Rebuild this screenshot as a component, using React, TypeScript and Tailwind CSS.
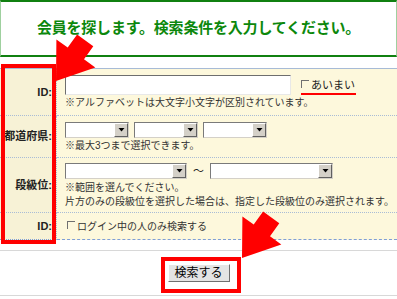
import React from "react";

type Pt = [number, number];

function arrowPoints(tip: Pt, ang: number, h: number, a: number, s: number, L: number): string {
  const u: Pt = [Math.cos(ang), Math.sin(ang)];
  const n: Pt = [-u[1], u[0]];
  const B: Pt = [tip[0] - h * u[0], tip[1] - h * u[1]];
  const C: Pt = [B[0] - L * u[0], B[1] - L * u[1]];
  const pts: Pt[] = [
    tip,
    [B[0] + a * n[0], B[1] + a * n[1]],
    [B[0] + s * n[0], B[1] + s * n[1]],
    [C[0] + s * n[0], C[1] + s * n[1]],
    [C[0] - s * n[0], C[1] - s * n[1]],
    [B[0] - s * n[0], B[1] - s * n[1]],
    [B[0] - a * n[0], B[1] - a * n[1]],
  ];
  return pts.map((p) => `${p[0].toFixed(1)},${p[1].toFixed(1)}`).join(" ");
}

const FONT = "'Liberation Sans', 'Noto Sans CJK JP', sans-serif";

function Select({ w }: { w: number }) {
  return (
    <div
      className="flex h-[16px] bg-white border-t border-l border-t-[#7a7a7a] border-l-[#7a7a7a] border-b border-r border-b-[#d4d0c8] border-r-[#d4d0c8]"
      style={{ width: w }}
    >
      <div className="flex-1" />
      <div className="w-[14px] h-[14px] bg-[#d4d0c8] border border-t-white border-l-white border-b-[#606060] border-r-[#606060] flex items-center justify-center">
        <svg width="7" height="4" viewBox="0 0 7 4">
          <polygon points="0.5,0 6.5,0 3.5,3.5" fill="#000" />
        </svg>
      </div>
    </div>
  );
}

function Check() {
  return <span className="inline-block w-[8px] h-[8px] border-t border-l border-[#707070] mr-[2px] translate-y-[-1px]" />;
}

export default function App() {
  return (
    <div
      className="relative w-[397px] h-[299px] bg-white overflow-hidden text-[#222]"
      style={{ fontFamily: FONT }}
    >
      {/* title */}
      <div className="h-[57px] border-y-2 border-y-[#108010] border-x border-x-[#9fd09f] flex items-center justify-center">
        <div className="text-[15px] font-bold text-[#0c880c] tracking-[-0.2px]">
          会員を探します。検索条件を入力してください。
        </div>
      </div>

      {/* table */}
      <div className="mt-[11px] border-t border-[#a7bbd6]">
        <div className="grid grid-cols-[57px_1fr]">
          {/* ID row */}
          <div className="h-[47px] bg-[#f7f2d6] flex items-center justify-end pr-[4px] text-[11px] font-bold border-r border-dotted border-[#a9bcd6] border-b">
            ID:
          </div>
          <div className="h-[47px] bg-[#fdf8dc] pl-[8px] pt-[6px] border-b border-dotted border-[#a9bcd6]">
            <div className="flex items-center">
              <div className="w-[226px] h-[20px] bg-white border-t border-l border-[#6e6e6e] border-b border-r border-b-[#e8e8e8] border-r-[#e8e8e8]" />
              <div className="ml-[10px] text-[11px] flex items-center">
                <Check />
                あいまい
              </div>
            </div>
            <div className="text-[10px] leading-[12px] mt-[2px] text-[#333]">
              ※アルファベットは大文字小文字が区別されています。
            </div>
          </div>

          {/* prefecture row */}
          <div className="h-[42px] bg-[#f7f2d6] flex items-center justify-end pr-[4px] text-[11px] font-bold border-r border-dotted border-[#a9bcd6] border-b whitespace-nowrap">
            都道府県:
          </div>
          <div className="h-[42px] bg-[#fdf8dc] pl-[8px] pt-[6px] border-b border-dotted border-[#a9bcd6]">
            <div className="flex gap-[5px]">
              <Select w={64} />
              <Select w={64} />
              <Select w={64} />
            </div>
            <div className="text-[10px] leading-[12px] mt-[2px] text-[#333]">
              ※最大3つまで選択できます。
            </div>
          </div>

          {/* grade row */}
          <div className="h-[55px] bg-[#f7f2d6] flex items-center justify-end pr-[4px] text-[11px] font-bold border-r border-dotted border-[#a9bcd6] border-b">
            段級位:
          </div>
          <div className="h-[55px] bg-[#fdf8dc] pl-[8px] pt-[5px] border-b border-dotted border-[#a9bcd6]">
            <div className="flex items-center">
              <Select w={122} />
              <span className="text-[11px] mx-[6px]">～</span>
              <Select w={123} />
            </div>
            <div className="text-[10px] leading-[14px] mt-[1px] text-[#333] whitespace-nowrap">
              ※範囲を選んでください。
              <br />
              片方のみの段級位を選択した場合は、指定した段級位のみ選択されます。
            </div>
          </div>

          {/* login row */}
          <div className="h-[27px] bg-[#f7f2d6] flex items-center justify-end pr-[4px] text-[11px] font-bold border-r border-dotted border-r-[#a9bcd6] border-b border-b-[#7f9fd6]">
            ID:
          </div>
          <div className="h-[27px] bg-[#fdf8dc] pl-[10px] flex items-center text-[10px] text-[#333] border-b border-dashed border-[#7f9fd6]">
            <Check />
            ログイン中の人のみ検索する
          </div>
        </div>
      </div>

      {/* button area */}
      <div className="mt-[10px] border-t border-[#d8d8d8] h-[46px] flex items-center justify-center border-b">
        <div className="w-[62px] h-[18px] bg-[#e4e4e4] border border-t-white border-l-white border-b-[#707070] border-r-[#707070] flex items-center justify-center text-[12px] text-black">
          検索する
        </div>
      </div>

      {/* annotation overlays */}
      <div className="absolute left-[1px] top-[64px] w-[55px] h-[180px] border-4 border-[#ff0000]" />
      <div className="absolute left-[161px] top-[257px] w-[80px] h-[36px] border-4 border-[#ff0000]" />
      <div className="absolute left-[301px] top-[93px] w-[55px] h-[2px] bg-[#ff0000]" />
      <svg className="absolute left-0 top-0 pointer-events-none" width="397" height="299">
        <polygon points={arrowPoints([56, 81], (2 * Math.PI) / 3 + 0.1, 34, 24, 10, 16)} fill="#ff0000" />
        <polygon points={arrowPoints([242, 258], (2 * Math.PI) / 3 + 0.1, 34, 24, 10, 16)} fill="#ff0000" />
      </svg>
    </div>
  );
}
